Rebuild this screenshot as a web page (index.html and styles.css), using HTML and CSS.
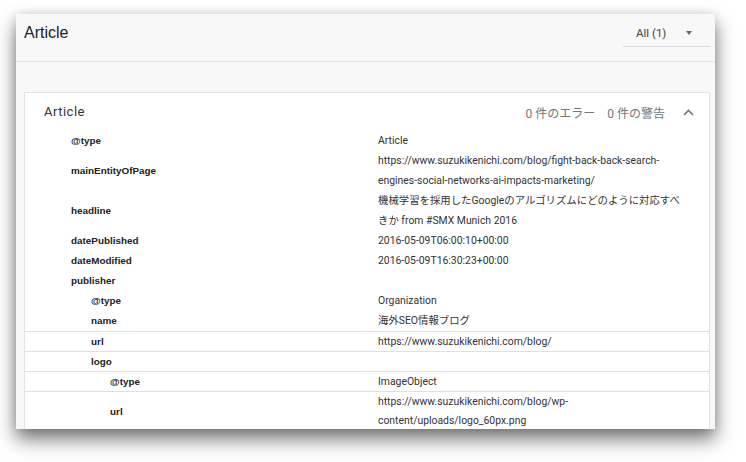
FILE: index.html
```html
<!DOCTYPE html>
<html lang="ja">
<head>
<meta charset="utf-8">
<title>Article</title>
<link rel="stylesheet" href="styles.css">
</head>
<body>
<div class="window">
  <header class="win-header">
    <div class="win-title">Article</div>
    <div class="dropdown">
      <span class="dd-label">All (1)</span>
      <span class="dd-arrow"></span>
    </div>
  </header>
  <div class="win-body">
    <section class="card">
      <div class="card-head">
        <div class="card-title">Article</div>
        <div class="card-stat err">0 件のエラー</div>
        <div class="card-stat warn">0 件の警告</div>
        <svg class="chev" width="11" height="7" viewBox="0 0 11 7"><path d="M1 6 L5.5 1.5 L10 6" fill="none" stroke="#757575" stroke-width="1.6"/></svg>
      </div>
      <div class="rows">
        <div class="row"><div class="key l0">@type</div><div class="val">Article</div></div>
        <div class="row"><div class="key l0">mainEntityOfPage</div><div class="val">https://www.suzukikenichi.com/blog/fight-back-back-search-engines-social-networks-ai-impacts-marketing/</div></div>
        <div class="row"><div class="key l0">headline</div><div class="val">機械学習を採用したGoogleのアルゴリズムにどのように対応すべきか from #SMX Munich 2016</div></div>
        <div class="row"><div class="key l0">datePublished</div><div class="val">2016-05-09T06:00:10+00:00</div></div>
        <div class="row"><div class="key l0">dateModified</div><div class="val">2016-05-09T16:30:23+00:00</div></div>
        <div class="row"><div class="key l0">publisher</div><div class="val"></div></div>
        <div class="row"><div class="key l1">@type</div><div class="val">Organization</div></div>
        <div class="row"><div class="key l1">name</div><div class="val">海外SEO情報ブログ</div></div>
        <div class="row sep"><div class="key l1">url</div><div class="val">https://www.suzukikenichi.com/blog/</div></div>
        <div class="row sep"><div class="key l1">logo</div><div class="val"></div></div>
        <div class="row sep"><div class="key l2">@type</div><div class="val">ImageObject</div></div>
        <div class="row sep"><div class="key l2">url</div><div class="val">https://www.suzukikenichi.com/blog/wp-content/uploads/logo_60px.png</div></div>
      </div>
    </section>
  </div>
</div>
</body>
</html>
```

FILE: styles.css
```css
html, body {
  margin: 0;
  padding: 0;
  background: #ffffff;
}

body {
  width: 746px;
  height: 462px;
  overflow: hidden;
  font-family: Roboto, "Noto Sans CJK JP", sans-serif;
}

.window {
  margin: 14px 0 0 16px;
  width: 699px;
  height: 415px;
  background: #f8f8f8;
  overflow: hidden;
  box-shadow: 0 10px 18px rgba(0, 0, 0, 0.55), 0 0 10px rgba(0, 0, 0, 0.10);
  display: flex;
  flex-direction: column;
}

.win-header {
  height: 47px;
  flex: none;
  display: flex;
  align-items: flex-start;
  padding-left: 8px;
  padding-right: 5px;
  border-bottom: 1px solid #e6e6e6;
}

.win-title {
  margin-top: 9px;
  font-family: "Liberation Sans", Arial, sans-serif;
  font-size: 16px;
  line-height: 20px;
  color: #222222;
}

.dropdown {
  margin-left: auto;
  margin-top: 6px;
  width: 87px;
  height: 26px;
  border-bottom: 1px solid #dddddd;
  display: flex;
  align-items: center;
}

.dd-label {
  padding-left: 13px;
  font-size: 11.5px;
  line-height: 26px;
  color: #444444;
}

.dd-arrow {
  margin-left: auto;
  margin-right: 18px;
  width: 0;
  height: 0;
  border-left: 3.5px solid transparent;
  border-right: 3.5px solid transparent;
  border-top: 4px solid #666666;
}

.win-body {
  flex: 1;
  padding: 30px 5px 0 8px;
}

.card {
  background: #ffffff;
  border: 1px solid #e2e2e2;
  border-bottom: none;
  height: 100%;
}

.card-head {
  height: 38px;
  display: flex;
  align-items: center;
  padding: 0 15px 0 19px;
}

.card-title {
  font-size: 13px;
  letter-spacing: 0.5px;
  color: #333333;
  margin-top: -1px;
}

.card-stat {
  font-size: 12px;
  color: #757575;
}

.card-stat.err {
  margin-left: auto;
}

.card-stat.warn {
  margin-left: 12px;
}

.chev {
  margin-left: 18px;
  display: block;
}

.row {
  display: grid;
  grid-template-columns: 353px 1fr;
  align-items: center;
  min-height: 20px;
  line-height: 20px;
}

.row.sep {
  border-top: 1px solid #e0e0e0;
  min-height: 19px;
  line-height: 19px;
}

.key {
  font-family: "Liberation Sans", Arial, sans-serif;
  font-weight: bold;
  font-size: 9.9px;
  color: #222222;
}

.key.l0 { padding-left: 46px; }
.key.l1 { padding-left: 66px; }
.key.l2 { padding-left: 85px; }

.val {
  font-family: Roboto, "Noto Sans CJK JP", sans-serif;
  font-size: 10.4px;
  color: #333333;
  padding-right: 19px;
}
```
